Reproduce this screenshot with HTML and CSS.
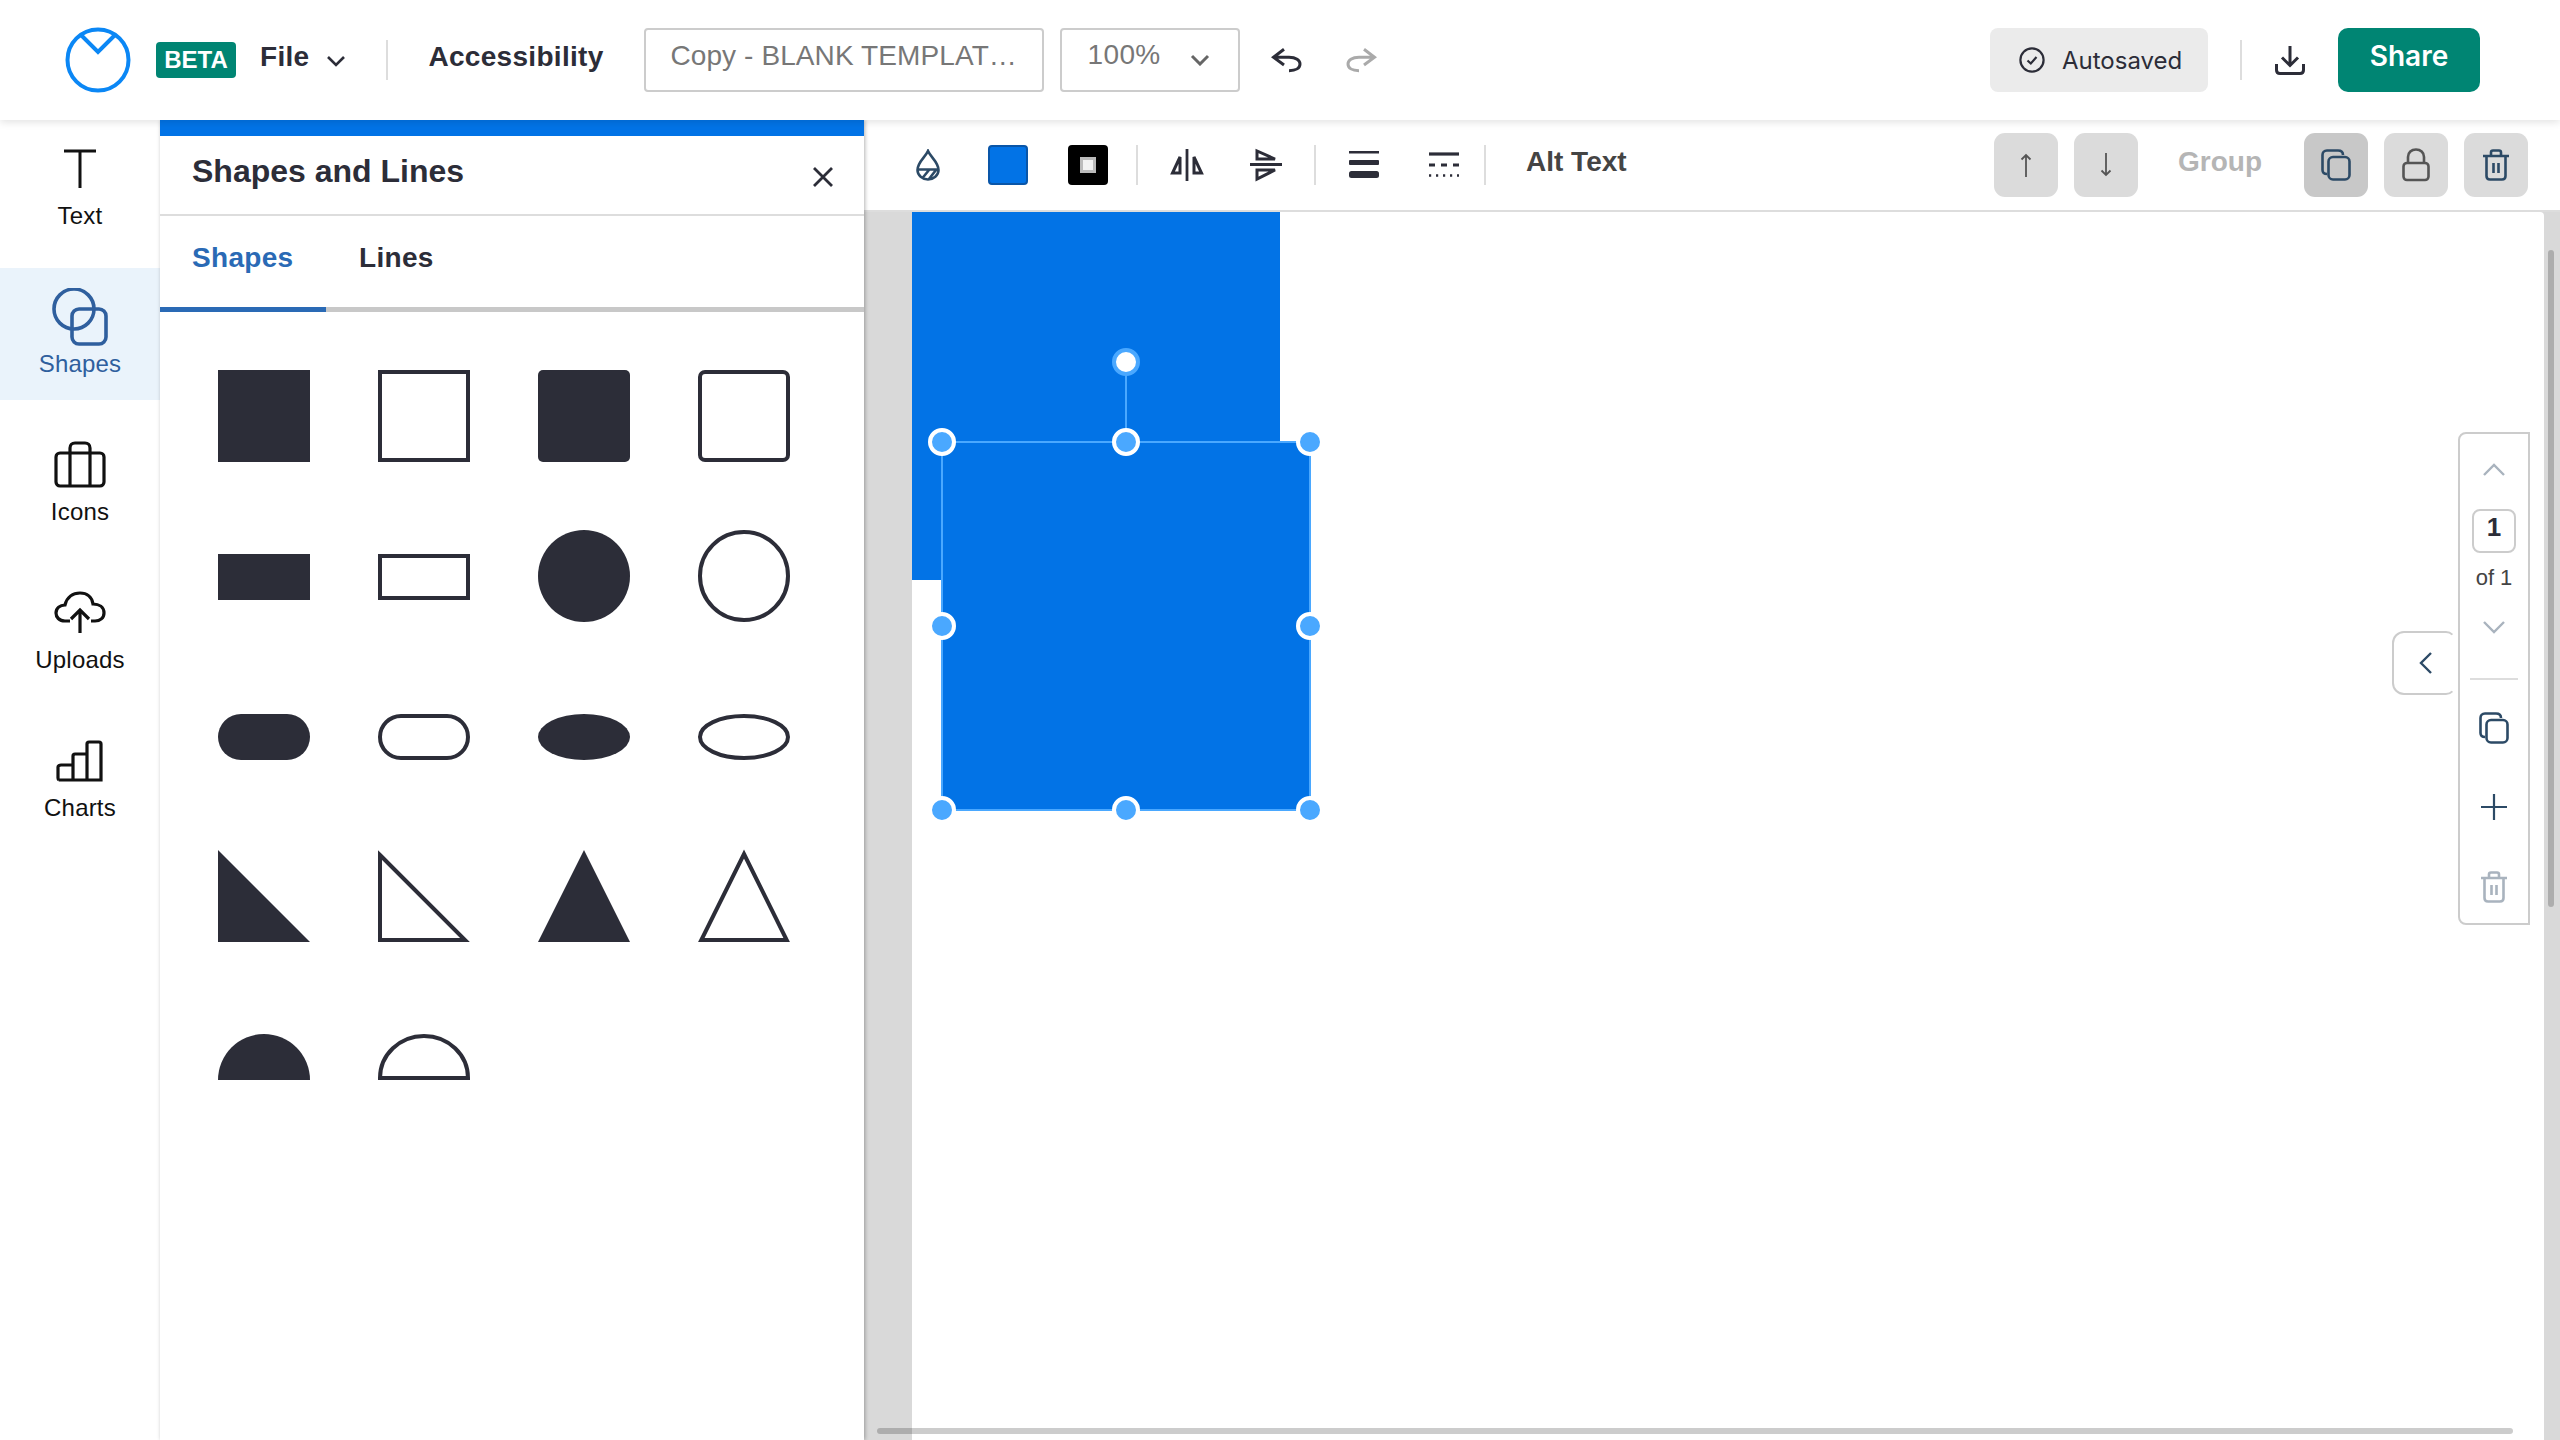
FILE: index.html
```html
<!DOCTYPE html>
<html>
<head>
	<meta charset="utf-8">
	<title>Editor</title>
	<link rel="stylesheet" href="styles.css">
</head>
<body>
	<header class="topbar">
		<svg class="logo" width="66" height="66" viewBox="0 0 66 66"><circle cx="33" cy="33" r="30.5" fill="none" stroke="#0b87f5" stroke-width="4"/><path d="M16 8 L33 25 L50 8" fill="none" stroke="#0b87f5" stroke-width="4"/></svg>
		<span class="beta">BETA</span>
		<span class="file-menu">File</span>
		<svg class="file-chevron" width="20" height="12" viewBox="0 0 20 12"><path d="M2 2 L10 10 L18 2" fill="none" stroke="#2c2d38" stroke-width="2.6"/></svg>
		<span class="vline vline-file"></span>
		<span class="access">Accessibility</span>
		<div class="name-box">Copy - BLANK TEMPLAT…</div>
		<div class="zoom-box">
			<span>100%</span>
			<svg width="20" height="12" viewBox="0 0 20 12"><path d="M2 2 L10 10 L18 2" fill="none" stroke="#666" stroke-width="3"/></svg>
		</div>
		<svg class="undo" width="32" height="28" viewBox="0 0 32 28"><path d="M13 3.300 L2.500 11.300 L13 19 M2.500 11.300 H18 C25 11.300 29 14.500 29 18 C29 22 25 24.700 18 24.700" fill="none" stroke="#2c2d38" stroke-width="3"/></svg>
		<svg class="redo" width="32" height="28" viewBox="0 0 32 28"><path d="M19 3.300 L29.500 11.300 L19 19 M29.500 11.300 H14 C7 11.300 3 14.500 3 18 C3 22 7 24.700 14 24.700" fill="none" stroke="#aaa" stroke-width="3"/></svg>
		<div class="spacer"></div>
		<div class="autosaved">
			<svg width="26" height="26" viewBox="0 0 26 26"><circle cx="13" cy="13" r="11.600" fill="none" stroke="#2c2d38" stroke-width="2.200"/><path d="M8.500 13.500 L11.800 16.500 L17.500 10" fill="none" stroke="#2c2d38" stroke-width="2.200"/></svg>
			<span>Autosaved</span>
		</div>
		<span class="vline vline-save"></span>
		<svg class="download" width="30" height="30" viewBox="0 0 30 30"><path d="M15 1 V20 M7 12.500 L15 20.500 L23 12.500 M1.500 19 V25 C1.500 27.500 3 28.500 5 28.500 H25 C27 28.500 28.500 27.500 28.500 25 V19" fill="none" stroke="#2c2d38" stroke-width="3"/></svg>
		<button class="share">Share</button>
	</header>

	<div class="main">
		<nav class="rail">
			<div class="rail-item">
				<div class="rail-icon"><svg width="34" height="42" viewBox="0 0 34 42"><path d="M1 3 H33 M17 3 V40" fill="none" stroke="#111" stroke-width="3"/></svg></div>
				<span>Text</span>
			</div>
			<div class="rail-item active">
				<div class="rail-icon"><svg width="56" height="58" viewBox="0 0 56 58"><circle cx="22" cy="21" r="20" fill="none" stroke="#2f5f9e" stroke-width="3.600"/><rect x="20" y="21" width="34" height="35" rx="7" fill="none" stroke="#2f5f9e" stroke-width="3.600"/></svg></div>
				<span>Shapes</span>
			</div>
			<div class="rail-item">
				<div class="rail-icon"><svg width="52" height="48" viewBox="0 0 52 48"><rect x="2" y="12" width="48" height="33" rx="4" fill="none" stroke="#111" stroke-width="3.200"/><path d="M16 45 V7 C16 4 18 2 21 2 H31 C34 2 36 4 36 7 V45" fill="none" stroke="#111" stroke-width="3.200"/></svg></div>
				<span>Icons</span>
			</div>
			<div class="rail-item">
				<div class="rail-icon"><svg width="52" height="44" viewBox="0 0 52 44"><path d="M16 30 H11 C5 30 2 26 2 22 C2 17 6 14 11 14 C13 6 19 2 26 2 C33 2 38 6 39 13 C45 13 50 16 50 22 C50 27 46 30 41 30 H37" fill="none" stroke="#111" stroke-width="3.200"/><path d="M26 42 V20 M17 28 L26 19 L35 28" fill="none" stroke="#111" stroke-width="3.200"/></svg></div>
				<span>Uploads</span>
			</div>
			<div class="rail-item">
				<div class="rail-icon"><svg width="48" height="42" viewBox="0 0 48 42"><path d="M3 40 H45 V4 C45 2.500 44 2 43 2 H33 C31.500 2 31 3 31 4 V40 M31 14 H19 C17.500 14 17 15 17 16 V40 M17 25 H5 C3.500 25 2 26 2 27 V38 C2 39.500 3 40 3 40" fill="none" stroke="#111" stroke-width="3.200"/></svg></div>
				<span>Charts</span>
			</div>
		</nav>

		<aside class="panel">
			<div class="panel-title">
				<span>Shapes and Lines</span>
				<svg width="22" height="22" viewBox="0 0 22 22"><path d="M2 2 L20 20 M20 2 L2 20" fill="none" stroke="#2c2d38" stroke-width="2.800"/></svg>
			</div>
			<div class="tabs">
				<div class="tab current">Shapes</div>
				<div class="tab">Lines</div>
			</div>
			<div class="shapes">
				<svg class="shape" viewBox="0 0 92 92"><rect width="92" height="92"/></svg>
				<svg class="shape line" viewBox="0 0 92 92"><rect x="2" y="2" width="88" height="88"/></svg>
				<svg class="shape" viewBox="0 0 92 92"><rect width="92" height="92" rx="5"/></svg>
				<svg class="shape line" viewBox="0 0 92 92"><rect x="2" y="2" width="88" height="88" rx="5"/></svg>

				<svg class="shape" viewBox="0 0 92 92"><rect y="24" width="92" height="46"/></svg>
				<svg class="shape line" viewBox="0 0 92 92"><rect x="2" y="26" width="88" height="42"/></svg>
				<svg class="shape" viewBox="0 0 92 92"><circle cx="46" cy="46" r="46"/></svg>
				<svg class="shape line" viewBox="0 0 92 92"><circle cx="46" cy="46" r="44"/></svg>

				<svg class="shape" viewBox="0 0 92 92"><rect y="24" width="92" height="46" rx="23"/></svg>
				<svg class="shape line" viewBox="0 0 92 92"><rect x="2" y="26" width="88" height="42" rx="21"/></svg>
				<svg class="shape" viewBox="0 0 92 92"><ellipse cx="46" cy="47" rx="46" ry="23"/></svg>
				<svg class="shape line" viewBox="0 0 92 92"><ellipse cx="46" cy="47" rx="44" ry="21"/></svg>

				<svg class="shape" viewBox="0 0 92 92"><path d="M0 0 L92 92 H0 Z"/></svg>
				<svg class="shape line" viewBox="0 0 92 92"><path d="M2 5 L87 90 H2 Z"/></svg>
				<svg class="shape" viewBox="0 0 92 92"><path d="M46 0 L92 92 H0 Z"/></svg>
				<svg class="shape line" viewBox="0 0 92 92"><path d="M46 4 L88.700 90 H3.300 Z"/></svg>

				<svg class="shape" viewBox="0 0 92 92"><path d="M0 70 A46 46 0 0 1 92 70 Z"/></svg>
				<svg class="shape line" viewBox="0 0 92 92"><path d="M2 68 A44 42 0 0 1 90 68 Z"/></svg>
			</div>
		</aside>

		<section class="work">
			<div class="toolbar">
				<svg class="tool-drop" width="24" height="32" viewBox="0 0 24 32"><path d="M12 2 C9.500 8 1.500 13 1.500 21 C1.500 26.500 6.500 30.500 12 30.500 C17.500 30.500 22.500 26.500 22.500 21 C22.500 13 14.500 8 12 2 Z M2 20.500 H22 M6.500 29 L13 21 M13 30 L20 21" fill="none" stroke="#2c4a66" stroke-width="2.600"/></svg>
				<span class="swatch swatch-fill"></span>
				<span class="swatch swatch-line"><i></i></span>
				<span class="vline vline-t1"></span>
				<svg class="tool-fliph" width="34" height="34" viewBox="0 0 34 34"><path d="M17 1 V33" fill="none" stroke="#2c2d38" stroke-width="2.800"/><path d="M10 9 V25 H2.500 Z M24 9 V25 H31.500 Z" fill="none" stroke="#2c2d38" stroke-width="3"/></svg>
				<svg class="tool-flipv" width="34" height="34" viewBox="0 0 34 34"><path d="M1 16.500 H33" fill="none" stroke="#2c2d38" stroke-width="3"/><path d="M8 3 V11 H26 Z M8 22 V31 L26 22 Z" fill="none" stroke="#2c2d38" stroke-width="3"/></svg>
				<span class="vline vline-t2"></span>
				<svg class="tool-weight" width="30" height="28" viewBox="0 0 30 28"><rect y="0" width="30" height="2.500"/><rect y="9" width="30" height="5" rx="1"/><rect y="20" width="30" height="7" rx="2.500"/></svg>
				<svg class="tool-dash" width="30" height="26" viewBox="0 0 30 26"><path d="M0 2 H30" stroke="#2c2d38" stroke-width="3.200"/><path d="M0 13 H30" stroke="#2c2d38" stroke-width="2.800" stroke-dasharray="6 6"/><path d="M0 23.500 H30" stroke="#2c2d38" stroke-width="2.600" stroke-dasharray="2.200 4.800"/></svg>
				<span class="vline vline-t3"></span>
				<span class="alt">Alt Text</span>
				<div class="spacer"></div>
				<button class="tbtn"><svg width="14" height="24" viewBox="0 0 14 24"><path d="M7 24 V2 M2.500 6.500 L7 2 L11.500 6.500" fill="none" stroke="#555" stroke-width="1.800"/></svg></button>
				<button class="tbtn"><svg width="14" height="24" viewBox="0 0 14 24"><path d="M7 0 V22 M2.500 17.500 L7 22 L11.500 17.500" fill="none" stroke="#555" stroke-width="1.800"/></svg></button>
				<span class="group">Group</span>
				<button class="tbtn on"><svg width="30" height="32" viewBox="0 0 30 32"><use href="#copy-icon"/></svg></button>
				<button class="tbtn"><svg width="28" height="34" viewBox="0 0 28 34"><rect x="1.500" y="15" width="25" height="17" rx="3.500" fill="none" stroke="#555" stroke-width="2.600"/><path d="M6 15 V9 C6 4.500 9.500 1.500 14 1.500 C18.500 1.500 22 4.500 22 9 V15" fill="none" stroke="#555" stroke-width="2.600"/></svg></button>
				<button class="tbtn"><svg width="26" height="32" viewBox="0 0 26 32"><use href="#trash-icon" stroke="#2c4a66"/></svg></button>
			</div>

			<div class="canvas-wrap">
				<div class="canvas">
					<div class="back-rect"></div>
					<div class="sel-rect"></div>
					<div class="rot-line"></div>
					<span class="handle rot"></span>
					<span class="handle h-tl"></span>
					<span class="handle h-tc"></span>
					<span class="handle h-tr"></span>
					<span class="handle h-ml"></span>
					<span class="handle h-mr"></span>
					<span class="handle h-bl"></span>
					<span class="handle h-bc"></span>
					<span class="handle h-br"></span>

					<div class="collapse"><svg width="14" height="24" viewBox="0 0 14 24"><path d="M12 2 L2 12 L12 22" fill="none" stroke="#2c4a66" stroke-width="2.400"/></svg></div>
					<div class="pages">
						<svg class="pg-chevron" width="24" height="14" viewBox="0 0 24 14"><path d="M2 12 L12 2 L22 12" fill="none" stroke="#a9b3be" stroke-width="2.400"/></svg>
						<div class="pg-num">1</div>
						<div class="pg-of">of 1</div>
						<svg class="pg-chevron pg-down" width="24" height="14" viewBox="0 0 24 14"><path d="M2 2 L12 12 L22 2" fill="none" stroke="#a9b3be" stroke-width="2.400"/></svg>
						<div class="pg-line"></div>
						<svg class="pg-copy" width="30" height="32" viewBox="0 0 30 32"><use href="#copy-icon"/></svg>
						<svg class="pg-plus" width="26" height="26" viewBox="0 0 26 26"><path d="M13 0 V26 M0 13 H26" fill="none" stroke="#2c4a66" stroke-width="2.200"/></svg>
						<svg class="pg-trash" width="26" height="32" viewBox="0 0 26 32"><use href="#trash-icon" stroke="#a9b3be"/></svg>
					</div>
				</div>
				<div class="bar-y"></div>
				<div class="bar-x"></div>
			</div>
		</section>
	</div>

	<svg class="defs" width="0" height="0">
		<defs>
			<g id="copy-icon" fill="none" stroke="#2c4a66" stroke-width="2.600">
				<path d="M6 25 C3 25 1.500 23.500 1.500 21 V6 C1.500 3.500 3 1.500 6 1.500 H17 C20 1.500 22 3 22 6"/>
				<rect x="7.500" y="8" width="21" height="22.500" rx="4.500"/>
			</g>
			<g id="trash-icon" fill="none" stroke-width="2.600">
				<path d="M0 7 H26 M8 6 V3.500 C8 2 9 1.500 10 1.500 H16 C17 1.500 18 2 18 3.500 V6"/>
				<path d="M3.500 7 V27 C3.500 29.500 5 30.500 7 30.500 H19 C21 30.500 22.500 29.500 22.500 27 V7"/>
				<path d="M10.500 14 V24 M15.500 14 V24"/>
			</g>
		</defs>
	</svg>
</body>
</html>
```

FILE: styles.css
```css
*{
	margin: 0;
	padding: 0;
	box-sizing: border-box;
}
html, body{
	height: 100%;
	overflow: hidden;
}
body{
	display: flex;
	flex-direction: column;
	background: #fff;
	color: #2c2d38;
	font-family: "Liberation Sans", Arial, sans-serif;
}
button{
	border: 0;
	font-family: inherit;
}
.spacer{
	flex: 1;
}
.vline{
	display: block;
	width: 2px;
	height: 40px;
	background: #ddd;
	flex: none;
}
.defs{
	position: absolute;
}

/* top bar */
.topbar{
	display: flex;
	align-items: center;
	height: 120px;
	flex: none;
	padding-left: 65px;
	position: relative;
	z-index: 3;
	background: #fff;
	box-shadow: 0 2px 8px rgba(0,0,0,.12);
}
.beta{
	width: 80px;
	height: 36px;
	line-height: 35px;
	margin-left: 25px;
	background: #008573;
	border-radius: 4px;
	color: #fff;
	font-size: 24px;
	font-weight: bold;
	text-align: center;
}
.file-menu{
	margin-left: 24px;
	margin-bottom: 6px;
	font-size: 28px;
	font-weight: bold;
	letter-spacing: .3px;
}
.file-chevron{
	margin-left: 17px;
	margin-top: 1px;
}
.vline-file{
	margin-left: 40px;
}
.access{
	margin-left: 40px;
	margin-bottom: 6px;
	width: 216px;
	font-size: 28px;
	font-weight: bold;
	letter-spacing: .3px;
}
.name-box{
	width: 400px;
	height: 64px;
	line-height: 52px;
	padding-left: 24px;
	border: 2px solid #ccc;
	border-radius: 4px;
	color: #777;
	font-size: 28px;
	letter-spacing: .1px;
	white-space: nowrap;
}
.zoom-box{
	display: flex;
	align-items: center;
	justify-content: space-between;
	width: 180px;
	height: 64px;
	margin-left: 16px;
	padding: 0 28px 0 25px;
	border: 2px solid #ccc;
	border-radius: 4px;
	color: #777;
	font-size: 28px;
	letter-spacing: .4px;
}
.zoom-box span{
	margin-top: -10px;
}
.undo{
	margin-left: 31px;
}
.redo{
	margin-left: 42px;
}
.autosaved{
	display: flex;
	align-items: center;
	gap: 17px;
	width: 218px;
	height: 64px;
	padding-left: 29px;
	background: #ebebeb;
	border-radius: 8px;
	font-family: Inter, sans-serif;
	font-size: 24px;
}
.vline-save{
	margin-left: 32px;
}
.download{
	margin-left: 33px;
}
.share{
	width: 142px;
	height: 64px;
	margin-left: 33px;
	margin-right: 80px;
	background: #008573;
	border-radius: 10px;
	color: #fff;
	font-family: Inter, sans-serif;
	font-size: 28px;
	font-weight: 600;
	padding-bottom: 8px;
}

.main{
	display: flex;
	flex: 1;
	min-height: 0;
}

/* left rail */
.rail{
	width: 160px;
	flex: none;
	display: flex;
	flex-direction: column;
	gap: 16px;
	position: relative;
	z-index: 2;
	box-shadow: 1px 0 4px rgba(0,0,0,.2);
	background: #fff;
	color: #111;
	font-size: 24px;
	letter-spacing: .2px;
}
.rail-item{
	height: 132px;
	display: flex;
	flex-direction: column;
	align-items: center;
}
.rail-icon{
	height: 60px;
	margin-top: 19px;
	display: flex;
	align-items: center;
	justify-content: center;
}
.rail-item span{
	margin-top: 3px;
}
.rail-item.active{
	background: #eaf3fb;
	color: #2f5f9e;
}

/* shapes panel */
.panel{
	width: 704px;
	flex: none;
	position: relative;
	z-index: 2;
	border-top: 16px solid #0273e6;
	box-shadow: 1px 0 4px rgba(0,0,0,.3);
	background: #fff;
}
.panel-title{
	display: flex;
	align-items: center;
	justify-content: space-between;
	height: 80px;
	padding: 0 30px 0 32px;
	border-bottom: 2px solid #ddd;
	font-size: 32px;
	font-weight: bold;
}
.panel-title span{
	margin-top: -8px;
}
.panel-title svg{
	margin-top: 3px;
}
.tabs{
	display: flex;
	height: 96px;
	border-bottom: 5px solid #c8c8c8;
}
.tab{
	height: 96px;
	padding: 0 33px;
	line-height: 84px;
	font-size: 28px;
	font-weight: bold;
	letter-spacing: .3px;
}
.tab.current{
	width: 166px;
	padding-left: 32px;
	color: #2a6ab5;
	border-bottom: 5px solid #2a6ab5;
}
.shapes{
	display: grid;
	grid-template-columns: repeat(4, 92px);
	grid-auto-rows: 92px;
	gap: 68px;
	padding: 58px 0 0 58px;
}
.shape{
	display: block;
	width: 92px;
	height: 92px;
	fill: #2c2d38;
	overflow: visible;
}
.shape.line{
	fill: none;
	stroke: #2c2d38;
	stroke-width: 4;
}

/* work area */
.work{
	flex: 1;
	min-width: 0;
	display: flex;
	flex-direction: column;
}
.toolbar{
	display: flex;
	align-items: center;
	height: 92px;
	flex: none;
	padding-right: 32px;
	padding-top: 4px;
	border-bottom: 2px solid #ddd;
	background: #fff;
}
.tool-drop{
	margin-left: 52px;
	margin-top: -4px;
}
.swatch{
	display: flex;
	align-items: center;
	justify-content: center;
	width: 40px;
	height: 40px;
	border-radius: 4px;
	margin-top: -4px;
}
.swatch-fill{
	margin-left: 48px;
	background: #0273e6;
	border: 2px solid #0a56a8;
}
.swatch-line{
	margin-left: 40px;
	background: #000;
}
.swatch-line i{
	width: 16px;
	height: 16px;
	background: #f2f2f2;
	border: 3px solid #bbb;
}
.vline-t1{
	margin-left: 28px;
	margin-top: -4px;
}
.tool-fliph{
	margin-left: 32px;
	margin-top: -4px;
}
.tool-flipv{
	margin-left: 45px;
	margin-top: -4px;
}
.vline-t2{
	margin-left: 31px;
	margin-top: -4px;
}
.tool-weight{
	margin-left: 33px;
	margin-top: -4px;
	fill: #2c2d38;
}
.tool-dash{
	margin-left: 50px;
	margin-top: -4px;
}
.vline-t3{
	margin-left: 25px;
	margin-top: -4px;
}
.alt{
	margin-left: 40px;
	margin-top: -10px;
	font-size: 28px;
	font-weight: bold;
	color: #444;
}
.tbtn{
	display: flex;
	align-items: center;
	justify-content: center;
	width: 64px;
	height: 64px;
	margin-left: 16px;
	background: #dbdbdb;
	border-radius: 11px;
	margin-top: -4px;
}
.tbtn.on{
	background: #c8c8c8;
}
.group{
	width: 110px;
	margin-left: 40px;
	margin-top: -10px;
	color: #b5b5b5;
	font-size: 28px;
	font-weight: bold;
}

/* canvas */
.canvas-wrap{
	flex: 1;
	min-height: 0;
	position: relative;
	background: #d9d9d9;
	padding: 0 16px 0 48px;
}
.canvas{
	position: relative;
	height: 100%;
	background: #fff;
	border-top-right-radius: 4px;
}
.back-rect{
	position: absolute;
	left: 0;
	top: 0;
	width: 368px;
	height: 368px;
	background: #0273e6;
}
.sel-rect{
	position: absolute;
	left: 29px;
	top: 229px;
	width: 370px;
	height: 370px;
	background: #0273e6;
	border: 2px solid #4aa8ff;
}
.rot-line{
	position: absolute;
	left: 213px;
	top: 160px;
	width: 2px;
	height: 70px;
	background: #4aa8ff;
}
.handle{
	position: absolute;
	width: 28px;
	height: 28px;
	margin: -14px 0 0 -14px;
	border-radius: 50%;
	background: #4aa8ff;
	border: 4px solid #fff;
}
.handle.rot{
	left: 214px;
	top: 150px;
	background: #fff;
	border-color: #4aa8ff;
}
.h-tl{ left: 30px; top: 230px; }
.h-tc{ left: 214px; top: 230px; }
.h-tr{ left: 398px; top: 230px; }
.h-ml{ left: 30px; top: 414px; }
.h-mr{ left: 398px; top: 414px; }
.h-bl{ left: 30px; top: 598px; }
.h-bc{ left: 214px; top: 598px; }
.h-br{ left: 398px; top: 598px; }

/* pages strip */
.pages{
	position: absolute;
	left: 1546px;
	top: 220px;
	width: 72px;
	height: 493px;
	display: flex;
	flex-direction: column;
	align-items: center;
	border: 2px solid #ccc;
	border-radius: 8px 0 0 8px;
	background: #fff;
}
.pg-chevron{
	margin-top: 29px;
	flex: none;
}
.pg-num{
	width: 44px;
	height: 44px;
	margin-top: 32px;
	line-height: 32px;
	border: 2px solid #ccc;
	border-radius: 8px;
	font-size: 26px;
	font-weight: bold;
	text-align: center;
}
.pg-of{
	margin-top: 12px;
	color: #444;
	font-size: 22px;
}
.pg-down{
	margin-top: 29px;
}
.pg-line{
	width: 48px;
	height: 2px;
	margin-top: 44px;
	background: #ddd;
	flex: none;
}
.pg-copy{
	margin-top: 32px;
	flex: none;
}
.pg-plus{
	margin-top: 50px;
	flex: none;
}
.pg-trash{
	margin-top: 51px;
	flex: none;
}
.collapse{
	position: absolute;
	left: 1480px;
	top: 419px;
	width: 64px;
	height: 64px;
	display: flex;
	align-items: center;
	justify-content: center;
	padding-left: 3px;
	border: 2px solid #ccc;
	border-right-color: transparent;
	border-radius: 12px 10px 10px 12px;
	background: #fff;
}
.bar-y{
	position: absolute;
	right: 6px;
	top: 38px;
	width: 6px;
	height: 657px;
	border-radius: 3px;
	background: rgba(0,0,0,.2);
}
.bar-x{
	position: absolute;
	left: 13px;
	bottom: 6px;
	width: 1636px;
	height: 6px;
	border-radius: 3px;
	background: rgba(0,0,0,.2);
}
```
